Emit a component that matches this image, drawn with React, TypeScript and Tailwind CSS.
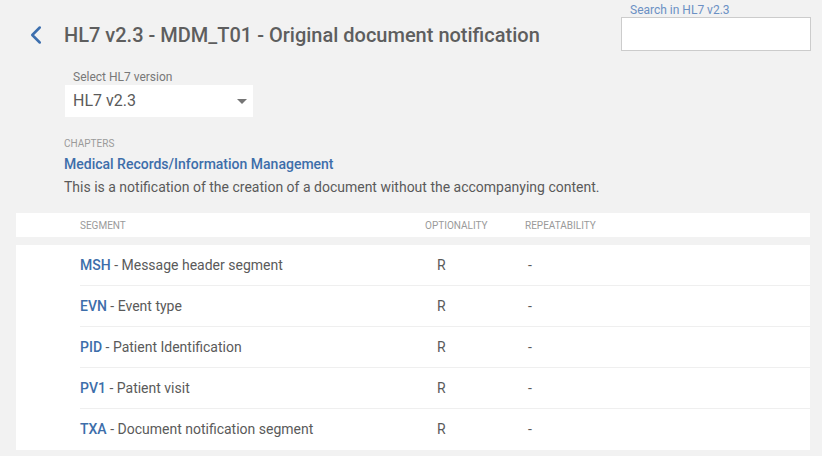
import { ChevronLeft } from 'lucide-react';

const segments = [
  { code: 'MSH', name: 'Message header segment', opt: 'R', rep: '-' },
  { code: 'EVN', name: 'Event type', opt: 'R', rep: '-' },
  { code: 'PID', name: 'Patient Identification', opt: 'R', rep: '-' },
  { code: 'PV1', name: 'Patient visit', opt: 'R', rep: '-' },
  { code: 'TXA', name: 'Document notification segment', opt: 'R', rep: '-' },
];

export default function App() {
  return (
    <div
      className="min-h-[456px] w-full bg-[#f2f2f2] text-[#5b5b5b]"
      style={{ fontFamily: 'Roboto, "Liberation Sans", sans-serif' }}
    >
      <div className="flex items-start justify-between pl-[21px] pr-[11px]">
        <div className="flex items-center pt-[20px]">
          <ChevronLeft className="h-[30px] w-[30px] text-[#3d6fae]" strokeWidth={2} />
          <h1 className="ml-[13px] text-[20px] font-medium leading-[28px] text-[#5e5e5e]">
            HL7 v2.3 - MDM_T01 - Original document notification
          </h1>
        </div>
        <div className="flex w-[190px] flex-col pt-[3px]">
          <label className="pl-[9px] text-[12px] leading-[14px] text-[#6b90c4]">Search in HL7 v2.3</label>
          <input className="h-[34px] w-full border border-[#cccccc] bg-white outline-none" />
        </div>
      </div>

      <div className="ml-[65px] mt-[19px]">
        <div className="pl-[8px] text-[12px] leading-[14px] text-[#787878]">Select HL7 version</div>
        <div className="mt-[1px] flex h-[32px] w-[188px] items-center justify-between bg-white pl-[8px] pr-[5px]">
          <span className="text-[16px] text-[#5a5a5a]">HL7 v2.3</span>
          <svg width="10" height="5" viewBox="0 0 10 5" className="mr-[1px]">
            <path d="M0 0h10L5 5z" fill="#757575" />
          </svg>
        </div>
      </div>

      <div className="ml-[64px] mt-[21px]">
        <div className="text-[10px] leading-[12px] text-[#9a9a9a]">CHAPTERS</div>
        <div className="mt-[5px] text-[14px] font-medium leading-[18px] text-[#3d6eaa]">
          Medical Records/Information Management
        </div>
        <div className="mt-[5px] text-[14px] leading-[18px] text-[#5a5a5a]">
          This is a notification of the creation of a document without the accompanying content.
        </div>
      </div>

      <div className="mx-[16px] mt-[17px] w-[794px] pb-[7px]">
        <div className="grid h-[24px] grid-cols-[64px_345px_100px_1fr] items-center bg-white text-[10px] text-[#9a9a9a]">
          <div />
          <div>SEGMENT</div>
          <div>OPTIONALITY</div>
          <div>REPEATABILITY</div>
        </div>
        <div className="mt-[8px] bg-white pl-[64px]">
          {segments.map((s, i) => (
            <div
              key={s.code}
              className={`grid h-[41px] grid-cols-[345px_100px_1fr] items-center text-[14px] ${
                i < segments.length - 1 ? 'border-b border-[#efefef]' : ''
              }`}
            >
              <div>
                <span className="font-medium text-[#3d6eaa]">{s.code}</span>
                <span className="text-[#5a5a5a]"> - {s.name}</span>
              </div>
              <div className="pl-[12px] text-[#5a5a5a]">{s.opt}</div>
              <div className="pl-[3px] text-[#5a5a5a]">{s.rep}</div>
            </div>
          ))}
        </div>
      </div>
    </div>
  );
}
